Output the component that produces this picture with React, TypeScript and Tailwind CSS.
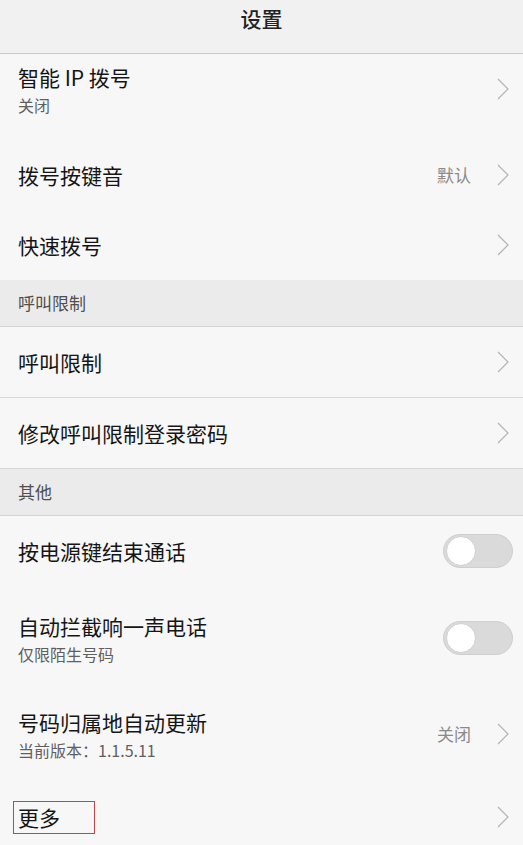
import React from "react";

const Chevron = () => (
  <svg width="12" height="22" viewBox="0 0 12 22" className="shrink-0">
    <path d="M1 1 L11 11 L1 21" fill="none" stroke="#b4b4b4" strokeWidth="1.2" />
  </svg>
);

const Toggle = () => (
  <div className="w-[70px] h-[34px] rounded-full bg-[#dadada] border border-[#cfcfcf] relative shrink-0 -mr-[4px]">
    <div className="absolute left-[2px] top-[1px] w-[30px] h-[30px] rounded-full bg-white border border-[#d0d0d0]" />
  </div>
);

type RowProps = {
  title: React.ReactNode;
  sub?: string;
  value?: string;
  toggle?: boolean;
  h: string;
  border?: boolean;
};

const Row = ({ title, sub, value, toggle, h, border }: RowProps) => (
  <div className={`flex items-center pl-[18px] pr-[14px] ${h} ${border ? "border-b border-[#d6d6d6]" : ""}`}>
    <div className="flex-1 flex flex-col">
      <div className="text-[21px] leading-[27px] text-[#151515]">{title}</div>
      {sub && <div className="text-[16px] leading-[20px] mt-[4px] text-[#5f5f5f]">{sub}</div>}
    </div>
    {value && <span className="text-[17px] text-[#8a8a8a] mr-[26px]">{value}</span>}
    {toggle ? <Toggle /> : <Chevron />}
  </div>
);

const Section = ({ label }: { label: string }) => (
  <div className="h-[47px] flex items-center pl-[18px] bg-[#ebebeb] border-b border-[#d3d3d3] text-[17px] text-[#4f4f4f]">
    {label}
  </div>
);

export default function App() {
  return (
    <div
      className="w-[523px] h-[845px] overflow-hidden bg-[#f7f7f7]"
      style={{ fontFamily: '"Noto Sans CJK SC", "Noto Sans", sans-serif' }}
    >
      <div className="h-[54px] bg-[#f1f1f1] border-b border-[#c9c9c9] flex justify-center pt-[3px]">
        <span className="text-[21px] font-medium text-[#222]">设置</span>
      </div>
      <div className="pb-[16px]">
        <Row title="智能 IP 拨号" sub="关闭" h="h-[70px]" />
      </div>
      <Row title="拨号按键音" value="默认" h="h-[70px]" />
      <Row title="快速拨号" h="h-[70px]" />
      <Section label="呼叫限制" />
      <Row title="呼叫限制" h="h-[71px]" border />
      <Row title="修改呼叫限制登录密码" h="h-[71px]" border />
      <Section label="其他" />
      <Row title="按电源键结束通话" toggle h="h-[70px]" />
      <Row title="自动拦截响一声电话" sub="仅限陌生号码" toggle h="h-[104px]" />
      <Row title="号码归属地自动更新" sub="当前版本：1.1.5.11" value="关闭" h="h-[88px]" />
      <Row
        title={
          <span className="inline-block -ml-[5px] pl-[4px] pr-[34px] border border-[#d04040] leading-[31px]">
            更多
          </span>
        }
        h="h-[78px]"
      />
    </div>
  );
}
